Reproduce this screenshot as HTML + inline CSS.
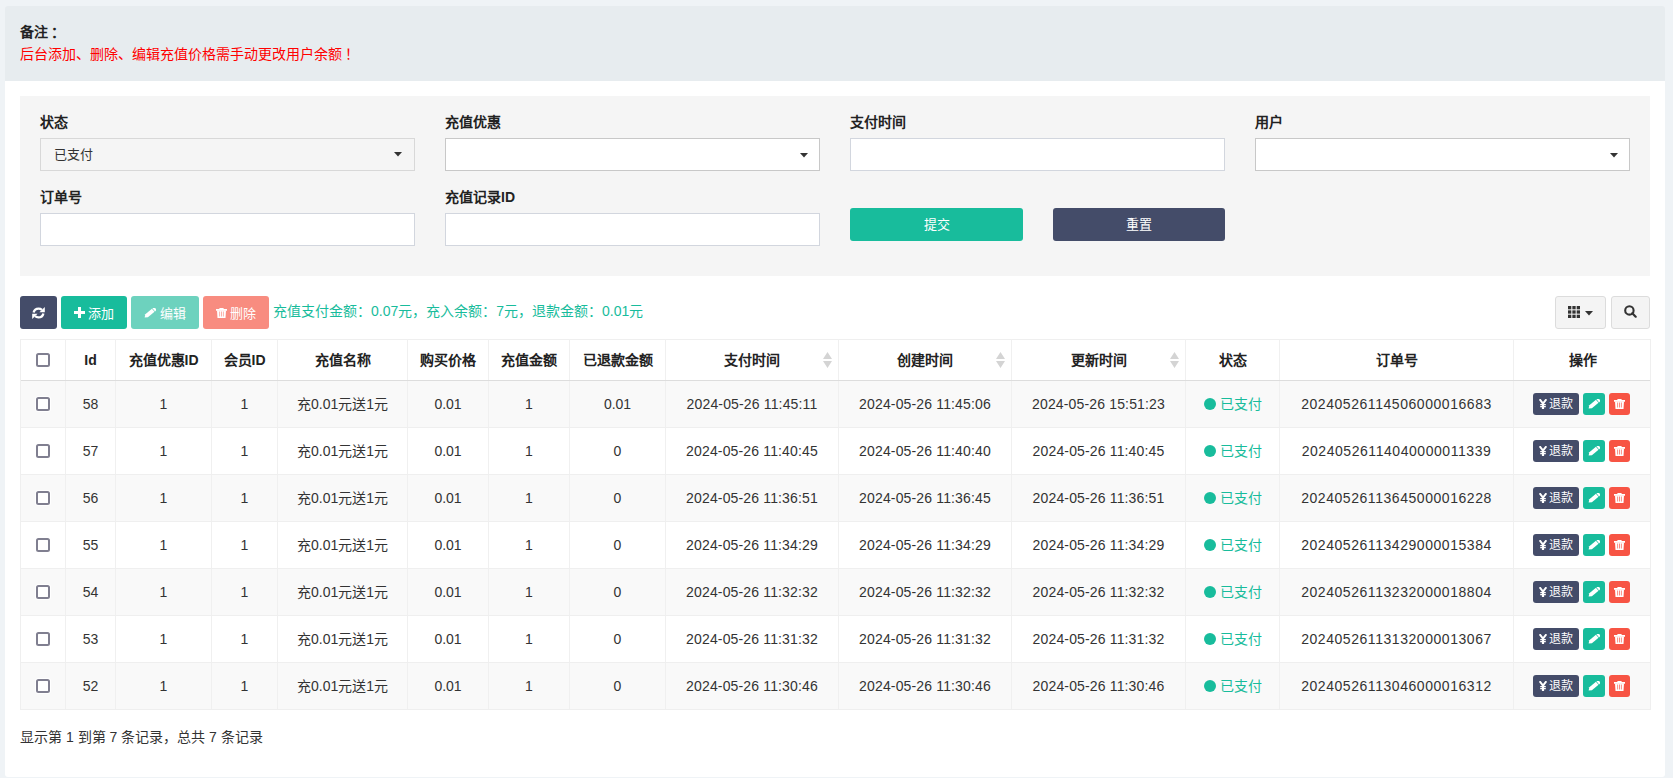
<!DOCTYPE html>
<html lang="zh-CN"><head><meta charset="utf-8"><title>recharge</title>
<style>
*{box-sizing:border-box;margin:0;padding:0}
html,body{width:1673px;height:778px;overflow:hidden}
body{text-spacing-trim:space-all;background:#eff3f6;font-family:"Liberation Sans",sans-serif;font-size:13px;color:#333;position:relative}
.callout{position:absolute;left:5px;top:6px;width:1660px;height:75px;background:#e7ecef;border-radius:3px 3px 0 0}
.callout .t1{position:absolute;left:15px;top:16px;font-weight:bold;line-height:20px;color:#222;font-size:14px}
.callout .t2{position:absolute;left:15px;top:38px;color:#ff0000;line-height:20px;font-size:14px}
.panel{position:absolute;left:5px;top:81px;width:1660px;height:696px;background:#fff;border-radius:0 0 3px 3px}
.search{position:absolute;left:20px;top:96px;width:1630px;height:180px;background:#f5f5f5}
.lbl{position:absolute;font-weight:bold;line-height:20px;color:#222;font-size:14px}
.inp{position:absolute;height:33px;width:375px;background:#fff;border:1px solid #d2d6de}
.inp.sel{border-color:#c8c8c8}
.inp.sel .car{right:11px;top:14px}
.inp.sel0{background:#f5f5f5;border-color:#d8d8d8}
.inp .v{position:absolute;left:13px;top:7px;line-height:18px;color:#333}
.inp .car{position:absolute;right:12px;top:13px;line-height:0}
.btn{position:absolute;color:#fff;border-radius:3px;text-align:center;line-height:33px;height:33px}
.tb{position:absolute;top:296px;height:33px;border-radius:3px;color:#fff;display:flex;align-items:center;justify-content:center}
.tb span{margin-left:3px}
.summary{position:absolute;left:273px;top:301px;line-height:20px;color:#18bc9c;font-size:14px}
.rtb{position:absolute;top:296px;height:33px;border:1px solid #dcdcdc;background:#f4f4f4;border-radius:3px;display:flex;align-items:center;justify-content:center}
.table{position:absolute;left:20px;top:339px;width:1631px;height:371px;border:1px solid #efefef;border-bottom:none}
.th{position:absolute;top:0;height:41px;border-right:1px solid #f0f0f0;text-align:center;font-weight:bold;font-size:14px;line-height:42px;color:#222}
.th:last-child{border-right:none}
.thead{position:absolute;left:0px;top:-1px;width:1629px;overflow:hidden;height:42px;border-bottom:1px solid #dddddd}
.tr{position:absolute;left:0px;width:1629px;overflow:hidden;height:47px;border-bottom:1px solid #efefef}
.td{position:absolute;top:-1px;height:47px;padding-top:1px;border-right:1px solid #f0f0f0;text-align:center;font-size:14px;line-height:46px;color:#333;white-space:nowrap}
.td:last-child{border-right:none}
.cb{display:inline-block;width:14px;height:14px;border:2px solid #807f90;border-radius:2.5px;vertical-align:middle;position:relative;top:-1px;background:#fff;box-shadow:0 0 0 1px #fff}
.sort{position:absolute;right:6px;top:13px}
.dot{display:inline-block;width:12px;height:12px;border-radius:50%;background:#18bc9c;vertical-align:middle;position:relative;top:-1px;margin-right:4px}
.st{color:#18bc9c}
.ab{display:inline-block;height:22px;line-height:22px;border-radius:3px;color:#fff;font-size:12px;vertical-align:middle;margin-left:4px;position:relative;top:-1px;left:-1px}
.ab svg{vertical-align:middle;position:relative;top:-1px}
.ab1{background:#444c69;width:46px;margin-left:0}
.ab1 b{margin-right:3px}
.ab2{background:#18bc9c;width:22px}
.ab3{background:#f75444;width:21px}
.dt{letter-spacing:0.15px}
.ord{letter-spacing:0.55px}
.footer{position:absolute;left:20px;top:727px;line-height:20px;font-size:14px;color:#333}
</style></head><body>
<div class="callout">
  <div class="t1">备注<span style="margin-left:3px">：</span></div>
  <div class="t2">后台添加、删除、编辑充值价格需手动更改用户余额<span style="margin-left:3px">！</span></div>
</div>
<div class="panel"></div>
<div class="search">
  <div class="lbl" style="left:20px;top:16px">状态</div>
  <div class="inp sel0" style="left:20px;top:42px"><span class="v">已支付</span><span class="car"><svg width="8" height="5" viewBox="0 0 8 5"><path d="M0 0h8L4 4.5z" fill="#333"/></svg></span></div>
  <div class="lbl" style="left:425px;top:16px">充值优惠</div>
  <div class="inp sel" style="left:425px;top:42px"><span class="car"><svg width="8" height="5" viewBox="0 0 8 5"><path d="M0 0h8L4 4.5z" fill="#333"/></svg></span></div>
  <div class="lbl" style="left:830px;top:16px">支付时间</div>
  <div class="inp" style="left:830px;top:42px"></div>
  <div class="lbl" style="left:1235px;top:16px">用户</div>
  <div class="inp sel" style="left:1235px;top:42px"><span class="car"><svg width="8" height="5" viewBox="0 0 8 5"><path d="M0 0h8L4 4.5z" fill="#333"/></svg></span></div>
  <div class="lbl" style="left:20px;top:91px">订单号</div>
  <div class="inp" style="left:20px;top:117px"></div>
  <div class="lbl" style="left:425px;top:91px">充值记录ID</div>
  <div class="inp" style="left:425px;top:117px"></div>
  <div class="btn" style="left:830px;top:112px;width:173px;background:#18bc9c">提交</div>
  <div class="btn" style="left:1033px;top:112px;width:172px;background:#444c69">重置</div>
</div>
<div class="tb" style="left:20px;width:37px;background:#444c69"><svg width="13" height="12" viewBox="0 0 13 12" style="position:relative;top:0px"><path d="M1.6 5.6C2.2 3 4.2 1.6 6.6 1.6c1.3 0 2.4.4 3.3 1.2" fill="none" stroke="#fff" stroke-width="2.3"/><path d="M7.4 5.3H12.8V0z" fill="#fff"/><path d="M11.4 6.4c-.6 2.6-2.6 4-5 4-1.3 0-2.4-.4-3.3-1.2" fill="none" stroke="#fff" stroke-width="2.3"/><path d="M5.6 6.7H0.2V12z" fill="#fff"/></svg></div>
<div class="tb" style="left:61px;width:66px;background:#18bc9c"><svg width="11" height="11" viewBox="0 0 11 11"><path d="M4 0h3v4h4v3H7v4H4V7H0V4h4z" fill="#fff"/></svg><span>添加</span></div>
<div class="tb" style="left:131px;width:68px;background:#6dd2be"><svg width="12" height="10" viewBox="0 0 12 10"><g transform="translate(6 5) rotate(-40) translate(-7 -2)"><path d="M0 2L2.6 0H11.2V4H2.6z" fill="#fff"/><rect x="11.9" y="0" width="2.2" height="4" fill="#fff"/></g></svg><span style="margin-left:4px">编辑</span></div>
<div class="tb" style="left:203px;width:66px;background:#f88c80"><svg width="11" height="10" viewBox="0 0 11 10"><path d="M3.4 0h4.2v1h3.4v1.7H0V1h3.4z" fill="#fff"/><path d="M1 2.5h9l-.5 7.5H1.5z" fill="#fff"/><path d="M3.2 3.6h.9v5h-.9zM5.05 3.6h.9v5h-.9zM6.9 3.6h.9v5h-.9z" fill="#f88c80" fill-opacity=".75"/></svg><span>删除</span></div>
<div class="summary">充值支付金额：0.07元，充入余额：7元，退款金额：0.01元</div>
<div class="rtb" style="left:1555px;width:51px"><svg width="12" height="12" viewBox="0 0 12 12" fill="#333" style="position:relative;top:-1px"><rect x="0" y="0" width="3.3" height="3.3"/><rect x="4.35" y="0" width="3.3" height="3.3"/><rect x="8.7" y="0" width="3.3" height="3.3"/><rect x="0" y="4.35" width="3.3" height="3.3"/><rect x="4.35" y="4.35" width="3.3" height="3.3"/><rect x="8.7" y="4.35" width="3.3" height="3.3"/><rect x="0" y="8.7" width="3.3" height="3.3"/><rect x="4.35" y="8.7" width="3.3" height="3.3"/><rect x="8.7" y="8.7" width="3.3" height="3.3"/></svg><span style="margin-left:5px;line-height:0;position:relative;top:1px"><svg width="8" height="5" viewBox="0 0 8 5"><path d="M0 0h8L4 4.5z" fill="#333"/></svg></span></div>
<div class="rtb" style="left:1611px;width:39px"><svg width="13" height="13" viewBox="0 0 13 13" style="position:relative;top:-1px"><circle cx="5.4" cy="5.4" r="4.2" fill="none" stroke="#333" stroke-width="2.1"/><path d="M8.3 8.3l3.4 3.4" stroke="#333" stroke-width="2.2" stroke-linecap="round"/></svg></div>
<div class="table">
  <div class="thead"><div class="th" style="left:0px;width:45px"><span class="cb"></span></div><div class="th" style="left:45px;width:50px"><span class="tht">Id</span></div><div class="th" style="left:95px;width:96px"><span class="tht">充值优惠ID</span></div><div class="th" style="left:191px;width:66px"><span class="tht">会员ID</span></div><div class="th" style="left:257px;width:130px"><span class="tht">充值名称</span></div><div class="th" style="left:387px;width:81px"><span class="tht">购买价格</span></div><div class="th" style="left:468px;width:81px"><span class="tht">充值金额</span></div><div class="th" style="left:549px;width:96px"><span class="tht">已退款金额</span></div><div class="th" style="left:645px;width:173px"><span class="tht">支付时间</span><svg class="sort" width="9" height="16" viewBox="0 0 9 16"><path d="M4.5 0L9 7H0z M0 9h9L4.5 16z" fill="#d4d4d4"/></svg></div><div class="th" style="left:818px;width:173px"><span class="tht">创建时间</span><svg class="sort" width="9" height="16" viewBox="0 0 9 16"><path d="M4.5 0L9 7H0z M0 9h9L4.5 16z" fill="#d4d4d4"/></svg></div><div class="th" style="left:991px;width:174px"><span class="tht">更新时间</span><svg class="sort" width="9" height="16" viewBox="0 0 9 16"><path d="M4.5 0L9 7H0z M0 9h9L4.5 16z" fill="#d4d4d4"/></svg></div><div class="th" style="left:1165px;width:94px"><span class="tht">状态</span></div><div class="th" style="left:1259px;width:234px"><span class="tht">订单号</span></div><div class="th" style="left:1493px;width:137px"><span class="tht">操作</span></div></div>
  <div class="tr" style="top:41px;background:#f9f9f9"><div class="td" style="left:0px;width:45px"><span class="cb"></span></div><div class="td" style="left:45px;width:50px">58</div><div class="td" style="left:95px;width:96px">1</div><div class="td" style="left:191px;width:66px">1</div><div class="td" style="left:257px;width:130px">充0.01元送1元</div><div class="td" style="left:387px;width:81px">0.01</div><div class="td" style="left:468px;width:81px">1</div><div class="td" style="left:549px;width:96px">0.01</div><div class="td" style="left:645px;width:173px"><span class="dt">2024-05-26 11:45:11</span></div><div class="td" style="left:818px;width:173px"><span class="dt">2024-05-26 11:45:06</span></div><div class="td" style="left:991px;width:174px"><span class="dt">2024-05-26 15:51:23</span></div><div class="td" style="left:1165px;width:94px"><span class="dot"></span><span class="st">已支付</span></div><div class="td" style="left:1259px;width:234px"><span class="ord">20240526114506000016683</span></div><div class="td" style="left:1493px;width:137px"><span class="ab ab1"><svg width="8" height="10" viewBox="0 0 8 10" style="margin-right:2px;top:-1px"><path d="M0.6 0.2L4 4.6L7.4 0.2" fill="none" stroke="#fff" stroke-width="2"/><path d="M4 4.2V10" stroke="#fff" stroke-width="2.2"/><path d="M1.2 5.6h5.6M1.2 7.6h5.6" stroke="#fff" stroke-width="1.1"/></svg>退款</span><span class="ab ab2"><svg width="12" height="10" viewBox="0 0 12 10"><g transform="translate(6 5) rotate(-40) translate(-7 -2)"><path d="M0 2L2.6 0H11.2V4H2.6z" fill="#fff"/><rect x="11.9" y="0" width="2.2" height="4" fill="#fff"/></g></svg></span><span class="ab ab3"><svg width="11" height="10" viewBox="0 0 11 10"><path d="M3.4 0h4.2v1h3.4v1.7H0V1h3.4z" fill="#fff"/><path d="M1 2.5h9l-.5 7.5H1.5z" fill="#fff"/><path d="M3.2 3.6h.9v5h-.9zM5.05 3.6h.9v5h-.9zM6.9 3.6h.9v5h-.9z" fill="#f75444" fill-opacity=".75"/></svg></span></div></div><div class="tr" style="top:88px;background:#ffffff"><div class="td" style="left:0px;width:45px"><span class="cb"></span></div><div class="td" style="left:45px;width:50px">57</div><div class="td" style="left:95px;width:96px">1</div><div class="td" style="left:191px;width:66px">1</div><div class="td" style="left:257px;width:130px">充0.01元送1元</div><div class="td" style="left:387px;width:81px">0.01</div><div class="td" style="left:468px;width:81px">1</div><div class="td" style="left:549px;width:96px">0</div><div class="td" style="left:645px;width:173px"><span class="dt">2024-05-26 11:40:45</span></div><div class="td" style="left:818px;width:173px"><span class="dt">2024-05-26 11:40:40</span></div><div class="td" style="left:991px;width:174px"><span class="dt">2024-05-26 11:40:45</span></div><div class="td" style="left:1165px;width:94px"><span class="dot"></span><span class="st">已支付</span></div><div class="td" style="left:1259px;width:234px"><span class="ord">20240526114040000011339</span></div><div class="td" style="left:1493px;width:137px"><span class="ab ab1"><svg width="8" height="10" viewBox="0 0 8 10" style="margin-right:2px;top:-1px"><path d="M0.6 0.2L4 4.6L7.4 0.2" fill="none" stroke="#fff" stroke-width="2"/><path d="M4 4.2V10" stroke="#fff" stroke-width="2.2"/><path d="M1.2 5.6h5.6M1.2 7.6h5.6" stroke="#fff" stroke-width="1.1"/></svg>退款</span><span class="ab ab2"><svg width="12" height="10" viewBox="0 0 12 10"><g transform="translate(6 5) rotate(-40) translate(-7 -2)"><path d="M0 2L2.6 0H11.2V4H2.6z" fill="#fff"/><rect x="11.9" y="0" width="2.2" height="4" fill="#fff"/></g></svg></span><span class="ab ab3"><svg width="11" height="10" viewBox="0 0 11 10"><path d="M3.4 0h4.2v1h3.4v1.7H0V1h3.4z" fill="#fff"/><path d="M1 2.5h9l-.5 7.5H1.5z" fill="#fff"/><path d="M3.2 3.6h.9v5h-.9zM5.05 3.6h.9v5h-.9zM6.9 3.6h.9v5h-.9z" fill="#f75444" fill-opacity=".75"/></svg></span></div></div><div class="tr" style="top:135px;background:#f9f9f9"><div class="td" style="left:0px;width:45px"><span class="cb"></span></div><div class="td" style="left:45px;width:50px">56</div><div class="td" style="left:95px;width:96px">1</div><div class="td" style="left:191px;width:66px">1</div><div class="td" style="left:257px;width:130px">充0.01元送1元</div><div class="td" style="left:387px;width:81px">0.01</div><div class="td" style="left:468px;width:81px">1</div><div class="td" style="left:549px;width:96px">0</div><div class="td" style="left:645px;width:173px"><span class="dt">2024-05-26 11:36:51</span></div><div class="td" style="left:818px;width:173px"><span class="dt">2024-05-26 11:36:45</span></div><div class="td" style="left:991px;width:174px"><span class="dt">2024-05-26 11:36:51</span></div><div class="td" style="left:1165px;width:94px"><span class="dot"></span><span class="st">已支付</span></div><div class="td" style="left:1259px;width:234px"><span class="ord">20240526113645000016228</span></div><div class="td" style="left:1493px;width:137px"><span class="ab ab1"><svg width="8" height="10" viewBox="0 0 8 10" style="margin-right:2px;top:-1px"><path d="M0.6 0.2L4 4.6L7.4 0.2" fill="none" stroke="#fff" stroke-width="2"/><path d="M4 4.2V10" stroke="#fff" stroke-width="2.2"/><path d="M1.2 5.6h5.6M1.2 7.6h5.6" stroke="#fff" stroke-width="1.1"/></svg>退款</span><span class="ab ab2"><svg width="12" height="10" viewBox="0 0 12 10"><g transform="translate(6 5) rotate(-40) translate(-7 -2)"><path d="M0 2L2.6 0H11.2V4H2.6z" fill="#fff"/><rect x="11.9" y="0" width="2.2" height="4" fill="#fff"/></g></svg></span><span class="ab ab3"><svg width="11" height="10" viewBox="0 0 11 10"><path d="M3.4 0h4.2v1h3.4v1.7H0V1h3.4z" fill="#fff"/><path d="M1 2.5h9l-.5 7.5H1.5z" fill="#fff"/><path d="M3.2 3.6h.9v5h-.9zM5.05 3.6h.9v5h-.9zM6.9 3.6h.9v5h-.9z" fill="#f75444" fill-opacity=".75"/></svg></span></div></div><div class="tr" style="top:182px;background:#ffffff"><div class="td" style="left:0px;width:45px"><span class="cb"></span></div><div class="td" style="left:45px;width:50px">55</div><div class="td" style="left:95px;width:96px">1</div><div class="td" style="left:191px;width:66px">1</div><div class="td" style="left:257px;width:130px">充0.01元送1元</div><div class="td" style="left:387px;width:81px">0.01</div><div class="td" style="left:468px;width:81px">1</div><div class="td" style="left:549px;width:96px">0</div><div class="td" style="left:645px;width:173px"><span class="dt">2024-05-26 11:34:29</span></div><div class="td" style="left:818px;width:173px"><span class="dt">2024-05-26 11:34:29</span></div><div class="td" style="left:991px;width:174px"><span class="dt">2024-05-26 11:34:29</span></div><div class="td" style="left:1165px;width:94px"><span class="dot"></span><span class="st">已支付</span></div><div class="td" style="left:1259px;width:234px"><span class="ord">20240526113429000015384</span></div><div class="td" style="left:1493px;width:137px"><span class="ab ab1"><svg width="8" height="10" viewBox="0 0 8 10" style="margin-right:2px;top:-1px"><path d="M0.6 0.2L4 4.6L7.4 0.2" fill="none" stroke="#fff" stroke-width="2"/><path d="M4 4.2V10" stroke="#fff" stroke-width="2.2"/><path d="M1.2 5.6h5.6M1.2 7.6h5.6" stroke="#fff" stroke-width="1.1"/></svg>退款</span><span class="ab ab2"><svg width="12" height="10" viewBox="0 0 12 10"><g transform="translate(6 5) rotate(-40) translate(-7 -2)"><path d="M0 2L2.6 0H11.2V4H2.6z" fill="#fff"/><rect x="11.9" y="0" width="2.2" height="4" fill="#fff"/></g></svg></span><span class="ab ab3"><svg width="11" height="10" viewBox="0 0 11 10"><path d="M3.4 0h4.2v1h3.4v1.7H0V1h3.4z" fill="#fff"/><path d="M1 2.5h9l-.5 7.5H1.5z" fill="#fff"/><path d="M3.2 3.6h.9v5h-.9zM5.05 3.6h.9v5h-.9zM6.9 3.6h.9v5h-.9z" fill="#f75444" fill-opacity=".75"/></svg></span></div></div><div class="tr" style="top:229px;background:#f9f9f9"><div class="td" style="left:0px;width:45px"><span class="cb"></span></div><div class="td" style="left:45px;width:50px">54</div><div class="td" style="left:95px;width:96px">1</div><div class="td" style="left:191px;width:66px">1</div><div class="td" style="left:257px;width:130px">充0.01元送1元</div><div class="td" style="left:387px;width:81px">0.01</div><div class="td" style="left:468px;width:81px">1</div><div class="td" style="left:549px;width:96px">0</div><div class="td" style="left:645px;width:173px"><span class="dt">2024-05-26 11:32:32</span></div><div class="td" style="left:818px;width:173px"><span class="dt">2024-05-26 11:32:32</span></div><div class="td" style="left:991px;width:174px"><span class="dt">2024-05-26 11:32:32</span></div><div class="td" style="left:1165px;width:94px"><span class="dot"></span><span class="st">已支付</span></div><div class="td" style="left:1259px;width:234px"><span class="ord">20240526113232000018804</span></div><div class="td" style="left:1493px;width:137px"><span class="ab ab1"><svg width="8" height="10" viewBox="0 0 8 10" style="margin-right:2px;top:-1px"><path d="M0.6 0.2L4 4.6L7.4 0.2" fill="none" stroke="#fff" stroke-width="2"/><path d="M4 4.2V10" stroke="#fff" stroke-width="2.2"/><path d="M1.2 5.6h5.6M1.2 7.6h5.6" stroke="#fff" stroke-width="1.1"/></svg>退款</span><span class="ab ab2"><svg width="12" height="10" viewBox="0 0 12 10"><g transform="translate(6 5) rotate(-40) translate(-7 -2)"><path d="M0 2L2.6 0H11.2V4H2.6z" fill="#fff"/><rect x="11.9" y="0" width="2.2" height="4" fill="#fff"/></g></svg></span><span class="ab ab3"><svg width="11" height="10" viewBox="0 0 11 10"><path d="M3.4 0h4.2v1h3.4v1.7H0V1h3.4z" fill="#fff"/><path d="M1 2.5h9l-.5 7.5H1.5z" fill="#fff"/><path d="M3.2 3.6h.9v5h-.9zM5.05 3.6h.9v5h-.9zM6.9 3.6h.9v5h-.9z" fill="#f75444" fill-opacity=".75"/></svg></span></div></div><div class="tr" style="top:276px;background:#ffffff"><div class="td" style="left:0px;width:45px"><span class="cb"></span></div><div class="td" style="left:45px;width:50px">53</div><div class="td" style="left:95px;width:96px">1</div><div class="td" style="left:191px;width:66px">1</div><div class="td" style="left:257px;width:130px">充0.01元送1元</div><div class="td" style="left:387px;width:81px">0.01</div><div class="td" style="left:468px;width:81px">1</div><div class="td" style="left:549px;width:96px">0</div><div class="td" style="left:645px;width:173px"><span class="dt">2024-05-26 11:31:32</span></div><div class="td" style="left:818px;width:173px"><span class="dt">2024-05-26 11:31:32</span></div><div class="td" style="left:991px;width:174px"><span class="dt">2024-05-26 11:31:32</span></div><div class="td" style="left:1165px;width:94px"><span class="dot"></span><span class="st">已支付</span></div><div class="td" style="left:1259px;width:234px"><span class="ord">20240526113132000013067</span></div><div class="td" style="left:1493px;width:137px"><span class="ab ab1"><svg width="8" height="10" viewBox="0 0 8 10" style="margin-right:2px;top:-1px"><path d="M0.6 0.2L4 4.6L7.4 0.2" fill="none" stroke="#fff" stroke-width="2"/><path d="M4 4.2V10" stroke="#fff" stroke-width="2.2"/><path d="M1.2 5.6h5.6M1.2 7.6h5.6" stroke="#fff" stroke-width="1.1"/></svg>退款</span><span class="ab ab2"><svg width="12" height="10" viewBox="0 0 12 10"><g transform="translate(6 5) rotate(-40) translate(-7 -2)"><path d="M0 2L2.6 0H11.2V4H2.6z" fill="#fff"/><rect x="11.9" y="0" width="2.2" height="4" fill="#fff"/></g></svg></span><span class="ab ab3"><svg width="11" height="10" viewBox="0 0 11 10"><path d="M3.4 0h4.2v1h3.4v1.7H0V1h3.4z" fill="#fff"/><path d="M1 2.5h9l-.5 7.5H1.5z" fill="#fff"/><path d="M3.2 3.6h.9v5h-.9zM5.05 3.6h.9v5h-.9zM6.9 3.6h.9v5h-.9z" fill="#f75444" fill-opacity=".75"/></svg></span></div></div><div class="tr" style="top:323px;background:#f9f9f9"><div class="td" style="left:0px;width:45px"><span class="cb"></span></div><div class="td" style="left:45px;width:50px">52</div><div class="td" style="left:95px;width:96px">1</div><div class="td" style="left:191px;width:66px">1</div><div class="td" style="left:257px;width:130px">充0.01元送1元</div><div class="td" style="left:387px;width:81px">0.01</div><div class="td" style="left:468px;width:81px">1</div><div class="td" style="left:549px;width:96px">0</div><div class="td" style="left:645px;width:173px"><span class="dt">2024-05-26 11:30:46</span></div><div class="td" style="left:818px;width:173px"><span class="dt">2024-05-26 11:30:46</span></div><div class="td" style="left:991px;width:174px"><span class="dt">2024-05-26 11:30:46</span></div><div class="td" style="left:1165px;width:94px"><span class="dot"></span><span class="st">已支付</span></div><div class="td" style="left:1259px;width:234px"><span class="ord">20240526113046000016312</span></div><div class="td" style="left:1493px;width:137px"><span class="ab ab1"><svg width="8" height="10" viewBox="0 0 8 10" style="margin-right:2px;top:-1px"><path d="M0.6 0.2L4 4.6L7.4 0.2" fill="none" stroke="#fff" stroke-width="2"/><path d="M4 4.2V10" stroke="#fff" stroke-width="2.2"/><path d="M1.2 5.6h5.6M1.2 7.6h5.6" stroke="#fff" stroke-width="1.1"/></svg>退款</span><span class="ab ab2"><svg width="12" height="10" viewBox="0 0 12 10"><g transform="translate(6 5) rotate(-40) translate(-7 -2)"><path d="M0 2L2.6 0H11.2V4H2.6z" fill="#fff"/><rect x="11.9" y="0" width="2.2" height="4" fill="#fff"/></g></svg></span><span class="ab ab3"><svg width="11" height="10" viewBox="0 0 11 10"><path d="M3.4 0h4.2v1h3.4v1.7H0V1h3.4z" fill="#fff"/><path d="M1 2.5h9l-.5 7.5H1.5z" fill="#fff"/><path d="M3.2 3.6h.9v5h-.9zM5.05 3.6h.9v5h-.9zM6.9 3.6h.9v5h-.9z" fill="#f75444" fill-opacity=".75"/></svg></span></div></div>
</div>
<div class="footer">显示第 1 到第 7 条记录，总共 7 条记录</div>
</body></html>
